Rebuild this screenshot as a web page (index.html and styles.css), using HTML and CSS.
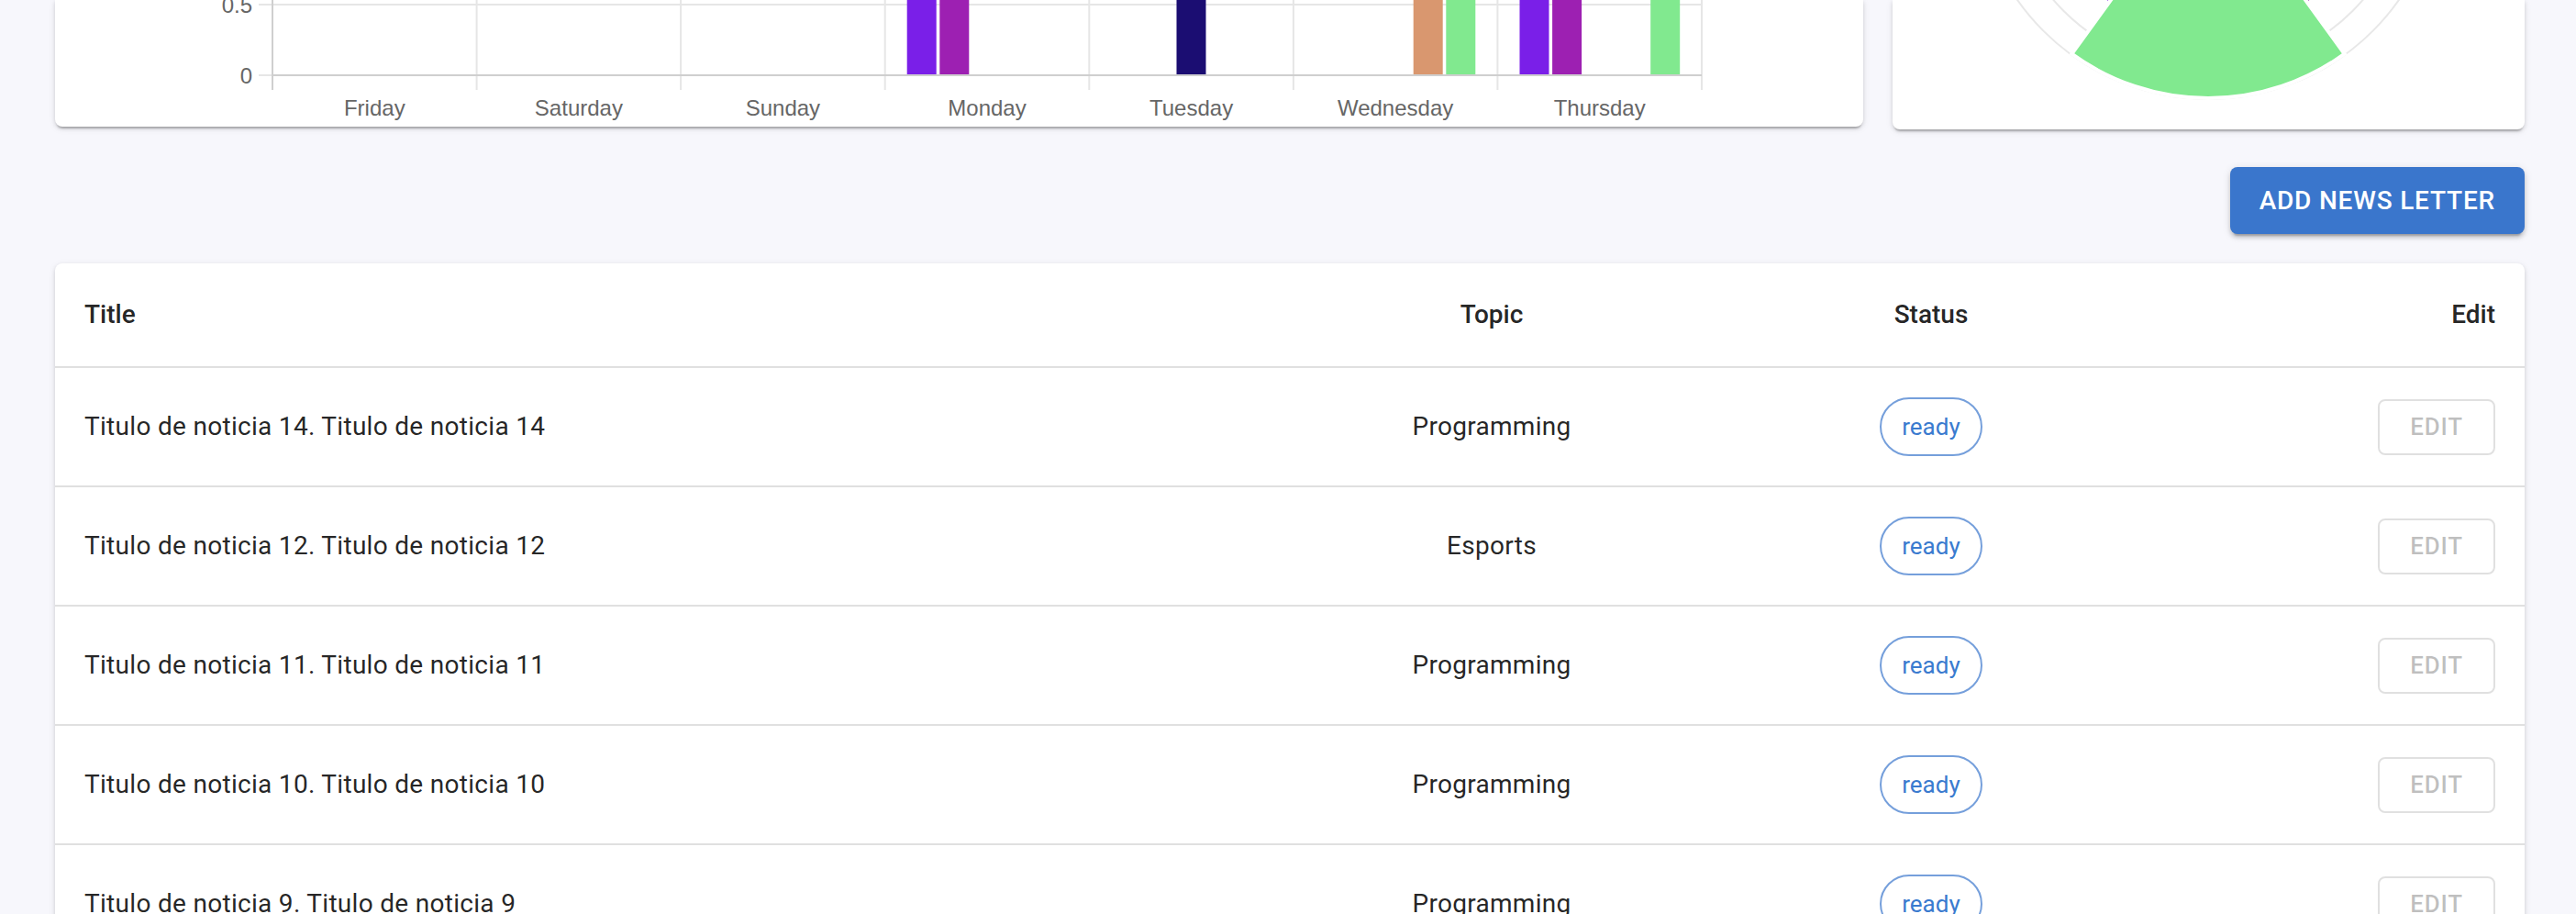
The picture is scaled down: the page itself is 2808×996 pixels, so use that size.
FILE: index.html
```html
<!DOCTYPE html>
<html lang="en">
<head>
<meta charset="utf-8">
<title>News letters</title>
<link rel="stylesheet" href="styles.css">
</head>
<body>
<div class="page">
  <div class="top-row">
    <section class="card chart-card">
      <svg class="bar-chart" width="1971" height="138" viewBox="0 0 1971 138">
        <g class="grid">
          <line x1="459.6" y1="0" x2="459.6" y2="98"/>
          <line x1="682.1" y1="0" x2="682.1" y2="98"/>
          <line x1="904.7" y1="0" x2="904.7" y2="98"/>
          <line x1="1127.3" y1="0" x2="1127.3" y2="98"/>
          <line x1="1349.9" y1="0" x2="1349.9" y2="98"/>
          <line x1="1572.4" y1="0" x2="1572.4" y2="98"/>
          <line x1="1795" y1="0" x2="1795" y2="98"/>
          <line x1="222" y1="5" x2="1795" y2="5"/>
          <line x1="222" y1="82" x2="237" y2="82"/>
        </g>
        <g class="bars">
          <rect class="c0" x="928.7" y="0" width="32" height="81"/>
          <rect class="c1" x="964.3" y="0" width="32" height="81"/>
          <rect class="c2" x="1222.5" y="0" width="32" height="81"/>
          <rect class="c3" x="1480.7" y="0" width="32" height="81"/>
          <rect class="c4" x="1516.3" y="0" width="32" height="81"/>
          <rect class="c0" x="1596.5" y="0" width="32" height="81"/>
          <rect class="c1" x="1632.1" y="0" width="32" height="81"/>
          <rect class="c4" x="1739.2" y="0" width="32" height="81"/>
        </g>
        <g class="axis">
          <line x1="237" y1="0" x2="237" y2="98"/>
          <line x1="236" y1="82" x2="1795" y2="82"/>
        </g>
        <g class="tick-label y-labels">
          <text x="215" y="13.6">0.5</text>
          <text x="215" y="90.6">0</text>
        </g>
        <g class="tick-label x-labels">
          <text x="348.3" y="126">Friday</text>
          <text x="570.9" y="126">Saturday</text>
          <text x="793.4" y="126">Sunday</text>
          <text x="1016" y="126">Monday</text>
          <text x="1238.6" y="126">Tuesday</text>
          <text x="1461.1" y="126">Wednesday</text>
          <text x="1683.7" y="126">Thursday</text>
        </g>
      </svg>
    </section>
    <section class="card polar-card">
      <svg class="polar-chart" width="689" height="141" viewBox="0 0 689 141">
        <circle class="ring" cx="344" cy="-146" r="223"/>
        <circle class="ring" cx="344" cy="-146" r="254"/>
        <path class="sector c0" d="M344,-146 L235.3,3.7 A185,185 0 0 1 168.1,-203.2 Z"/>
        <path class="sector c1" d="M344,-146 L519.9,-203.2 A185,185 0 0 1 452.7,3.7 Z"/>
        <path class="sector c4" d="M344,-146 L492.7,58.7 A253,253 0 0 1 195.3,58.7 Z"/>
      </svg>
    </section>
  </div>

  <div class="actions">
    <button class="btn-primary" type="button">Add news letter</button>
  </div>

  <section class="card table-card">
    <table class="news-table">
      <colgroup>
        <col class="col-title">
        <col class="col-topic">
        <col class="col-status">
        <col class="col-edit">
      </colgroup>
      <thead>
        <tr>
          <th class="left">Title</th>
          <th class="center">Topic</th>
          <th class="center">Status</th>
          <th class="right">Edit</th>
        </tr>
      </thead>
      <tbody>
        <tr>
          <td class="left">Titulo de noticia 14. Titulo de noticia 14</td>
          <td class="center">Programming</td>
          <td class="center"><span class="chip">ready</span></td>
          <td class="right"><button class="btn-edit" type="button" disabled>Edit</button></td>
        </tr>
        <tr>
          <td class="left">Titulo de noticia 12. Titulo de noticia 12</td>
          <td class="center">Esports</td>
          <td class="center"><span class="chip">ready</span></td>
          <td class="right"><button class="btn-edit" type="button" disabled>Edit</button></td>
        </tr>
        <tr>
          <td class="left">Titulo de noticia 11. Titulo de noticia 11</td>
          <td class="center">Programming</td>
          <td class="center"><span class="chip">ready</span></td>
          <td class="right"><button class="btn-edit" type="button" disabled>Edit</button></td>
        </tr>
        <tr>
          <td class="left">Titulo de noticia 10. Titulo de noticia 10</td>
          <td class="center">Programming</td>
          <td class="center"><span class="chip">ready</span></td>
          <td class="right"><button class="btn-edit" type="button" disabled>Edit</button></td>
        </tr>
        <tr>
          <td class="left">Titulo de noticia 9. Titulo de noticia 9</td>
          <td class="center">Programming</td>
          <td class="center"><span class="chip">ready</span></td>
          <td class="right"><button class="btn-edit" type="button" disabled>Edit</button></td>
        </tr>
      </tbody>
    </table>
  </section>
</div>
</body>
</html>
```

FILE: styles.css
```css
* {
  box-sizing: border-box;
}

html,
body {
  margin: 0;
  padding: 0;
}

body {
  background: #f7f7fc;
  font-family: Roboto, "Liberation Sans", Arial, sans-serif;
  color: rgba(0, 0, 0, 0.87);
  overflow: hidden;
}

.page {
  padding: 0 56px 0 60px;
}

.card {
  background: #ffffff;
  border-radius: 8px;
  box-shadow: 0 4px 2px -2px rgba(0, 0, 0, 0.22),
              0 2px 4px 0 rgba(0, 0, 0, 0.12),
              0 2px 8px 0 rgba(0, 0, 0, 0.08);
}

.top-row {
  display: grid;
  grid-template-columns: 1971px 689px;
  column-gap: 32px;
  align-items: start;
}

.chart-card {
  height: 138px;
  border-radius: 0 0 8px 8px;
  overflow: hidden;
}

.polar-card {
  height: 141px;
  border-radius: 0 0 8px 8px;
  overflow: hidden;
}

.bar-chart,
.polar-chart {
  display: block;
}

.grid line {
  stroke: #e6e6e6;
  stroke-width: 2;
}

.axis line {
  stroke: #cfcfcf;
  stroke-width: 2;
}

.tick-label text {
  font-family: "Liberation Sans", Arial, sans-serif;
  font-size: 24px;
  fill: #666666;
}

.y-labels text {
  text-anchor: end;
}

.x-labels text {
  text-anchor: middle;
}

.c0 { fill: #7a1fe8; }
.c1 { fill: #9d20b2; }
.c2 { fill: #1b0d72; }
.c3 { fill: #d9976f; }
.c4 { fill: #81e98f; }

.ring {
  fill: none;
  stroke: #e8e8e8;
  stroke-width: 2;
}

.sector {
  stroke: #ffffff;
  stroke-width: 4;
  stroke-linejoin: miter;
}

.actions {
  display: flex;
  justify-content: flex-end;
  margin-top: 41px;
}

.btn-primary {
  font-family: Roboto, "Liberation Sans", Arial, sans-serif;
  font-size: 28px;
  font-weight: 500;
  line-height: 49px;
  letter-spacing: 0.8px;
  text-transform: uppercase;
  color: #ffffff;
  background: #3a76cc;
  border: 0;
  border-radius: 8px;
  padding: 12px 32px;
  min-width: 128px;
  box-shadow: 0 6px 2px -4px rgba(0, 0, 0, 0.2),
              0 4px 4px 0 rgba(0, 0, 0, 0.14),
              0 2px 10px 0 rgba(0, 0, 0, 0.12);
  cursor: pointer;
}

.table-card {
  margin-top: 32px;
  overflow: hidden;
}

.news-table {
  width: 100%;
  table-layout: fixed;
  border-collapse: collapse;
}

.col-title { width: 1326px; }
.col-topic { width: 480px; }
.col-status { width: 478px; }
.col-edit { width: 408px; }

.news-table th,
.news-table td {
  padding: 32px;
  border-bottom: 2px solid #e0e0e0;
  font-size: 28px;
  vertical-align: middle;
  white-space: nowrap;
}

.news-table th {
  font-weight: 500;
  line-height: 48px;
}

.news-table td {
  font-weight: 400;
  line-height: 40px;
  letter-spacing: 0.3px;
}

.left { text-align: left; }
.center { text-align: center; }
.right { text-align: right; }

.chip {
  display: inline-flex;
  align-items: center;
  justify-content: center;
  height: 64px;
  padding: 0 22px;
  border: 2px solid rgba(58, 118, 204, 0.7);
  border-radius: 32px;
  color: #3a7bcf;
  font-size: 26px;
  line-height: 1;
  letter-spacing: 0;
  vertical-align: top;
}

.btn-edit {
  font-family: Roboto, "Liberation Sans", Arial, sans-serif;
  font-size: 26px;
  font-weight: 500;
  line-height: 45px;
  letter-spacing: 0.74px;
  text-transform: uppercase;
  color: rgba(0, 0, 0, 0.26);
  background: transparent;
  border: 2px solid rgba(0, 0, 0, 0.12);
  border-radius: 8px;
  padding: 6px 18px;
  min-width: 128px;
  vertical-align: middle;
}
```
